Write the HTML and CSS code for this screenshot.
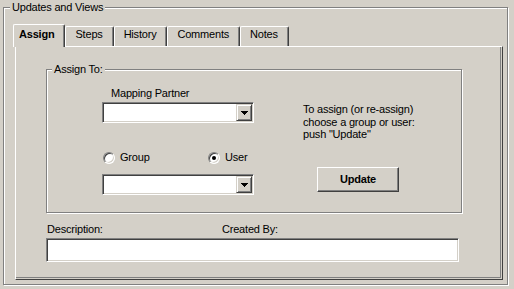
FILE: index.html
```html
<!DOCTYPE html>
<html>
<head>
<meta charset="utf-8">
<title>Updates and Views</title>
<link rel="stylesheet" href="styles.css">
</head>
<body>
<fieldset class="frame">
  <legend class="frame-title">Updates and Views</legend>
  <div class="tabs">
    <div class="tab tab-active">Assign</div>
    <div class="tab">Steps</div>
    <div class="tab">History</div>
    <div class="tab">Comments</div>
    <div class="tab">Notes</div>
  </div>
  <div class="panel">
    <fieldset class="group">
      <legend class="group-title">Assign To:</legend>
      <div class="group-body">
        <div class="col-left">
          <div class="field-label">Mapping Partner</div>
          <div class="combo">
            <span class="combo-btn"><svg width="7" height="4" viewBox="0 0 7 4" shape-rendering="crispEdges"><path d="M0 0h7v1h-1v1h-1v1h-1v1h-1v-1h-1v-1h-1v-1h-1z" fill="#000"/></svg></span>
          </div>
          <div class="radios">
            <span class="radio"><span class="radio-dot"></span>Group</span>
            <span class="radio"><span class="radio-dot radio-on"></span>User</span>
          </div>
          <div class="combo">
            <span class="combo-btn"><svg width="7" height="4" viewBox="0 0 7 4" shape-rendering="crispEdges"><path d="M0 0h7v1h-1v1h-1v1h-1v1h-1v-1h-1v-1h-1v-1h-1z" fill="#000"/></svg></span>
          </div>
        </div>
        <div class="col-right">
          <p class="hint">To assign (or re-assign)<br>choose a group or user:<br>push "Update"</p>
          <div class="btn">Update</div>
        </div>
      </div>
    </fieldset>
    <div class="desc-labels">
      <span class="desc-label">Description:</span>
      <span class="created-label">Created By:</span>
    </div>
    <div class="textbox"></div>
  </div>
</fieldset>
</body>
</html>
```
FILE: styles.css
```css
* { box-sizing: border-box; }
html, body { margin: 0; }
body {
  width: 514px;
  height: 289px;
  overflow: hidden;
  background: #d4d0c8;
  font: 11px/13px "Liberation Sans", Arial, sans-serif;
  letter-spacing: -0.2px;
  color: #000;
  padding: 1px 0 0 3px;
}

/* etched group boxes */
.frame, .group {
  margin: 0;
  border: 1px solid #808080;
  box-shadow: 1px 1px 0 #fff, inset 1px 1px 0 #fff;
  min-inline-size: 0;
}
.frame {
  width: 505px;
  height: 284px;
  padding: 0 4px 4px 9px;
}
.frame-title, .group-title {
  padding: 0 2px;
  background: #d4d0c8;
  line-height: 13px;
}
.frame-title { margin-left: -3px; }

/* tabs */
.tabs {
  display: flex;
  align-items: flex-end;
  height: 22px;
  margin-top: 10px;
}
.tab {
  height: 20px;
  padding: 0 10px 0 9px;
  line-height: 14px;
  border-top: 1px solid #fff;
  border-left: 1px solid #fff;
  border-right: 1px solid #404040;
  border-radius: 2px 2px 0 0;
  box-shadow: inset -1px 0 0 #808080;
  white-space: nowrap;
}
.tab-active {
  position: relative;
  z-index: 1;
  height: 23px;
  margin-bottom: -1px;
  padding: 2px 10px 0 5px;
  background: #d4d0c8;
  font-weight: bold;
}

/* tab page */
.panel {
  margin-left: 2px;
  height: 234px;
  border-top: 1px solid #fff;
  border-left: 1px solid #fff;
  border-right: 1px solid #404040;
  border-bottom: 1px solid #404040;
  box-shadow: inset -1px -1px 0 #d4d0c8, inset -2px -2px 0 #808080;
  padding: 16px 0 0 30px;
}

.group {
  width: 416px;
  height: 150px;
  padding: 0;
}
.group-title { margin-left: 5px; }
.group-body {
  display: flex;
  padding: 11px 0 0 55px;
}
.col-left { width: 152px; }
.field-label {
  padding-left: 9px;
  margin-bottom: 2px;
}

/* sunken fields */
.combo, .textbox {
  background: #fff;
  border: 1px solid;
  border-color: #808080 #fff #fff #808080;
  box-shadow: inset 1px 1px 0 #404040, inset -1px -1px 0 #d4d0c8;
}
.combo {
  height: 21px;
  display: flex;
  justify-content: flex-end;
}
.combo-btn {
  width: 16px;
  height: 17px;
  margin: 1px;
  background: #d4d0c8;
  border: 1px solid;
  border-color: #d4d0c8 #404040 #404040 #d4d0c8;
  box-shadow: inset 1px 1px 0 #fff, inset -1px -1px 0 #808080;
  display: flex;
  align-items: center;
  justify-content: center;
}
.combo-btn svg { display: block; }

/* radios */
.radios {
  display: grid;
  grid-template-columns: 105px auto;
  height: 13px;
  margin: 28px 0 10px 1px;
}
.radio {
  display: flex;
  align-items: center;
}
.radio-dot {
  width: 12px;
  height: 12px;
  margin-right: 5px;
  border-radius: 50%;
  background: #fff;
  border: 1px solid;
  border-color: #808080 #fff #fff #808080;
  box-shadow: inset 1px 1px 0 #404040, inset -1px -1px 0 #d4d0c8;
  display: flex;
  align-items: center;
  justify-content: center;
}
.radio-on::after {
  content: "";
  width: 4px;
  height: 4px;
  border-radius: 50%;
  background: #000;
}

/* right column */
.col-right { margin-left: 49px; }
.hint {
  margin: 16px 0 0;
  line-height: 12.5px;
  white-space: nowrap;
}
.btn {
  width: 82px;
  height: 25px;
  margin: 26px 0 0 14px;
  display: flex;
  align-items: center;
  justify-content: center;
  font-weight: bold;
  border: 1px solid;
  border-color: #fff #404040 #404040 #fff;
  box-shadow: inset -1px -1px 0 #808080;
}

/* description */
.desc-labels {
  display: flex;
  margin-top: 10px;
  padding-left: 1px;
}
.desc-label { width: 175px; }
.textbox {
  width: 413px;
  height: 24px;
  margin-top: 2px;
}
```
